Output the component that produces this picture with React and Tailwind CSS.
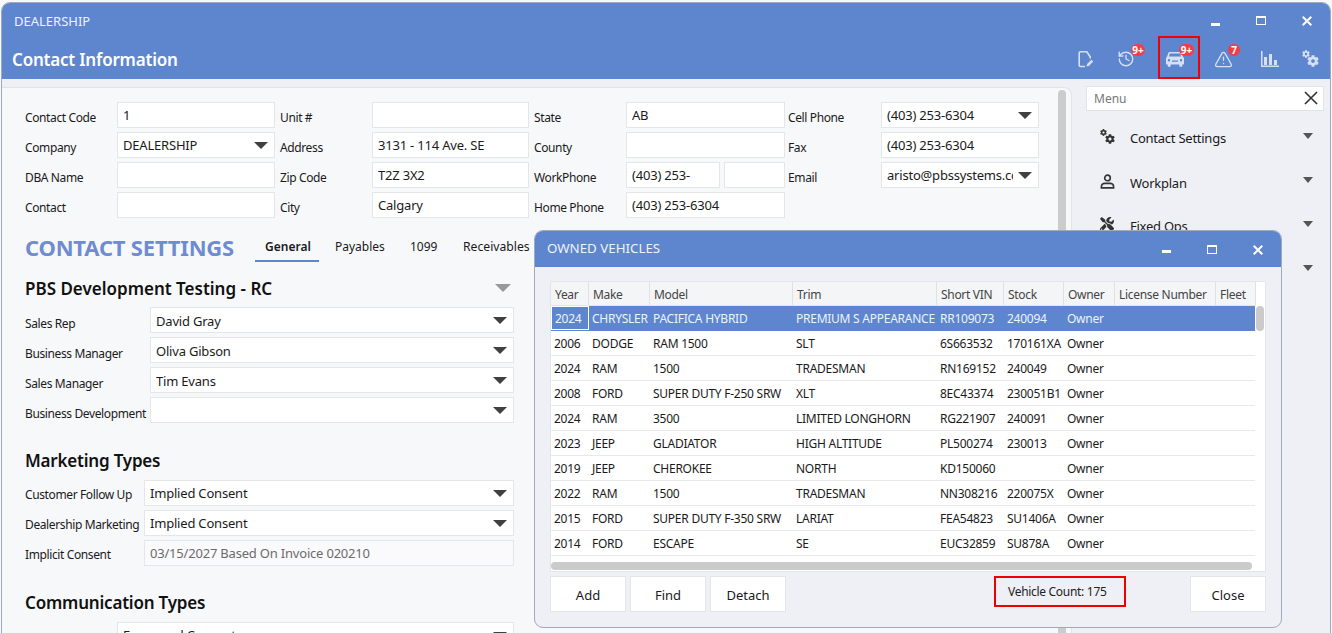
import { History, TriangleAlert } from 'lucide-react';
import { FaCog, FaTools } from 'react-icons/fa';

const VEHICLES = [
  ['2024', 'CHRYSLER', 'PACIFICA HYBRID', 'PREMIUM S APPEARANCE', 'RR109073', '240094', 'Owner'],
  ['2006', 'DODGE', 'RAM 1500', 'SLT', '6S663532', '170161XA', 'Owner'],
  ['2024', 'RAM', '1500', 'TRADESMAN', 'RN169152', '240049', 'Owner'],
  ['2008', 'FORD', 'SUPER DUTY F-250 SRW', 'XLT', '8EC43374', '230051B1', 'Owner'],
  ['2024', 'RAM', '3500', 'LIMITED LONGHORN', 'RG221907', '240091', 'Owner'],
  ['2023', 'JEEP', 'GLADIATOR', 'HIGH ALTITUDE', 'PL500274', '230013', 'Owner'],
  ['2019', 'JEEP', 'CHEROKEE', 'NORTH', 'KD150060', '', 'Owner'],
  ['2022', 'RAM', '1500', 'TRADESMAN', 'NN308216', '220075X', 'Owner'],
  ['2015', 'FORD', 'SUPER DUTY F-350 SRW', 'LARIAT', 'FEA54823', 'SU1406A', 'Owner'],
  ['2014', 'FORD', 'ESCAPE', 'SE', 'EUC32859', 'SU878A', 'Owner'],
];

const COLS = [
  { label: 'Year', w: 'w-[38px]' },
  { label: 'Make', w: 'w-[61px]' },
  { label: 'Model', w: 'w-[143px]' },
  { label: 'Trim', w: 'w-[144px]' },
  { label: 'Short VIN', w: 'w-[67px]' },
  { label: 'Stock', w: 'w-[60px]' },
  { label: 'Owner', w: 'w-[51px]' },
  { label: 'License Number', w: 'w-[101px]' },
  { label: 'Fleet', w: 'w-[40px]' },
];

const Caret = () => (
  <span className="absolute right-[6px] top-[9px] w-0 h-0 border-x-[7px] border-t-[7px] border-x-transparent border-t-[#404040]" />
);

function Field({ value, select, className = 'w-full', muted, lead = 'leading-[24px]' }) {
  return (
    <div className={`relative h-[26px] min-w-0 border border-[#e5e6ea] pl-[5px] text-[13px] tracking-[-0.2px] whitespace-nowrap ${select ? 'pr-[25px]' : 'pr-[2px]'} ${lead} ${muted ? 'text-[#6b6b6b] bg-[#fafafc]' : 'text-[#1a1a1a] bg-white'} ${className}`}>
      {value && <div className="overflow-hidden">{value}</div>}
      {select && <Caret />}
    </div>
  );
}

function Row({ label, labelW, value, select, muted, lead, labelPt = 'pt-[7px]' }) {
  return (
    <div className="flex h-[26px]">
      <div className={`shrink-0 leading-[18px] tracking-[-0.38px] text-[#1a1a1a] whitespace-nowrap ${labelPt} ${labelW}`}>{label}</div>
      <Field value={value} select={select} muted={muted} lead={lead} className="flex-1" />
    </div>
  );
}

const Gears = ({ className, small, big }) => (
  <span className={`relative block ${className}`}>
    <FaCog className={`absolute left-0 top-0 ${small}`} />
    <FaCog className={`absolute right-0 bottom-0 ${big}`} />
  </span>
);

function Badge({ children, className }) {
  return (
    <span className={`absolute h-[12px] rounded-[6px] bg-[#ee3f49] text-white text-[10px] font-bold leading-[12px] text-center ${className}`}>
      {children}
    </span>
  );
}

const CloseGlyph = ({ className, width = 2 }) => (
  <svg viewBox="0 0 10 10" className={className} fill="none" stroke="currentColor" strokeWidth={width}>
    <path d="M0.7 0.7 9.3 9.3M9.3 0.7 0.7 9.3" />
  </svg>
);

const WindowControls = ({ minX, maxX, closeX, minY, maxY }) => (
  <>
    <span className={`absolute w-[9px] h-[3px] bg-white ${minX} ${minY}`} />
    <span className={`absolute w-[10px] h-[9px] border border-t-[2px] border-white ${maxX} ${maxY}`} />
    <CloseGlyph className={`absolute w-[10px] h-[10px] text-white ${closeX} ${maxY}`} />
  </>
);

function MenuItem({ icon, label, top, caretTop }) {
  return (
    <>
      <div className={`absolute left-[1100px] w-[16px] h-[16px] text-[#333] ${top}`}>{icon}</div>
      <div className={`absolute left-[1130px] text-[13px] leading-[18px] tracking-[-0.25px] text-[#1a1a1a] ${top}`}>{label}</div>
      <span className={`absolute left-[1303px] w-0 h-0 border-x-[5px] border-t-[6px] border-x-transparent border-t-[#555] ${caretTop}`} />
    </>
  );
}

export default function App() {
  return (
    <div className="relative w-[1332px] h-[633px] overflow-hidden bg-[#f7f8fa] text-[12px] font-['Noto_Sans','Open_Sans',sans-serif]">
      {/* window frame */}
      <div className="absolute left-[1px] top-[2px] w-[1330px] h-[640px] rounded-t-[9px] bg-[#eff0f5] border border-[#9fabb9] overflow-hidden">
        <div className="h-[76px] bg-[#5d86cf]" />
      </div>

      <div className="absolute left-[14px] top-[12px] text-[13px] leading-[18px] text-[#eef2fa]">DEALERSHIP</div>
      <div className="absolute left-[12px] top-[47px] text-[17px] leading-[25px] tracking-[-0.2px] font-semibold text-white">Contact Information</div>
      <WindowControls minX="left-[1211px]" maxX="left-[1256px]" closeX="left-[1302px]" minY="top-[23px]" maxY="top-[16px]" />

      {/* toolbar */}
      <div className="absolute inset-0 text-[#d6e0f3]">
        <svg viewBox="0 0 16 17" className="absolute left-[1078px] top-[51px] w-[16px] h-[17px]" fill="none" stroke="currentColor" strokeWidth="1.6">
          <path d="M7 15.5H2.5a1.3 1.3 0 0 1-1.3-1.3V2.1A1.3 1.3 0 0 1 2.5.8h6.3l3.4 5v1.6" />
          <path d="M8.5 15.6l.6-2.5 4.3-4.4 1.8 1.8-4.3 4.4z" fill="currentColor" stroke="none" />
        </svg>
        <History className="absolute left-[1117px] top-[50px] w-[18px] h-[18px]" strokeWidth={1.8} />
        <svg viewBox="0 0 18 15" className="absolute left-[1166px] top-[52px] w-[18px] h-[15px]" fill="currentColor">
          <path fillRule="evenodd" d="M3.6 0h10.8c.6 0 1.1.4 1.3.9L17 4.800c.6.4 1 1 1 1.800v5.200c0 .4-.3.7-.7.7H16.300v1.300c0 .6-.4 1-1 1h-1c-.6 0-1-.4-1-1v-1.300H4.700v1.300c0 .6-.4 1-1 1h-1c-.6 0-1-.4-1-1v-1.300H.7c-.4 0-.7-.3-.7-.7V6.600c0-.8.4-1.400 1-1.800L2.300.9C2.500.4 3 0 3.600 0zM3.900 1.500 2.900 4.500h12.200l-1-3zM3 7a1.200 1.200 0 1 0 0 2.400A1.200 1.200 0 0 0 3 7zm12 0a1.200 1.200 0 1 0 0 2.400A1.200 1.200 0 0 0 15 7zM6 8.500v1.200h6V8.500z" />
        </svg>
        <TriangleAlert className="absolute left-[1214px] top-[50px] w-[19px] h-[19px]" strokeWidth={1.7} />
        <svg viewBox="0 0 18 16" className="absolute left-[1261px] top-[51px] w-[18px] h-[16px]" fill="currentColor">
          <path d="M0 0h1.500v14.500H18V16H0zM3 6h3v8H3zM8 3h3v11H8zM13 9h3v5h-3z" />
        </svg>
        <Gears className="absolute left-[1302px] top-[50px] w-[17px] h-[17px]" small="w-[8px] h-[8px]" big="w-[12px] h-[12px]" />
      </div>
      <Badge className="left-[1131px] top-[44px] w-[14px]">9+</Badge>
      <Badge className="left-[1179px] top-[44px] w-[15px]">9+</Badge>
      <Badge className="left-[1228px] top-[44px] w-[12px]">7</Badge>
      <div className="absolute left-[1158px] top-[36px] w-[42px] h-[43px] border-2 border-[#f00000]" />

      {/* main panel */}
      <div className="absolute left-[2px] top-[87px] w-[1070px] h-[560px] bg-[#f7f8fa] border-t border-r border-[#e2e3e8] rounded-tr-[8px]" />
      <div className="absolute left-[1058px] top-[90px] w-[8px] h-[560px] rounded-[4px] bg-[#cccccc]" />

      <div className="absolute left-[25px] top-[102px] w-[250px] flex flex-col gap-[4px]">
        <Row label="Contact Code" labelW="w-[92px]" value="1" />
        <Row label="Company" labelW="w-[92px]" value="DEALERSHIP" select />
        <Row label="DBA Name" labelW="w-[92px]" value="" />
        <Row label="Contact" labelW="w-[92px]" value="" />
      </div>
      <div className="absolute left-[280px] top-[102px] w-[249px] flex flex-col gap-[4px]">
        <Row label="Unit #" labelW="w-[92px]" value="" />
        <Row label="Address" labelW="w-[92px]" value="3131 - 114 Ave. SE" />
        <Row label="Zip Code" labelW="w-[92px]" value="T2Z 3X2" />
        <Row label="City" labelW="w-[92px]" value="Calgary" />
      </div>
      <div className="absolute left-[534px] top-[102px] w-[251px] flex flex-col gap-[4px]">
        <Row label="State" labelW="w-[92px]" value="AB" />
        <Row label="County" labelW="w-[92px]" value="" />
        <div className="flex h-[26px]">
          <div className="w-[92px] shrink-0 pt-[7px] leading-[18px] tracking-[-0.38px] text-[#1a1a1a]">WorkPhone</div>
          <Field value="(403) 253-" className="w-[94px] shrink-0 mr-[4px]" />
          <Field value="" className="flex-1" />
        </div>
        <Row label="Home Phone" labelW="w-[92px]" value="(403) 253-6304" />
      </div>
      <div className="absolute left-[788px] top-[102px] w-[251px] flex flex-col gap-[4px]">
        <Row label="Cell Phone" labelW="w-[93px]" value="(403) 253-6304" select />
        <Row label="Fax" labelW="w-[93px]" value="(403) 253-6304" />
        <Row label="Email" labelW="w-[93px]" value="aristo@pbssystems.cc" select />
      </div>

      <div className="absolute left-[25px] top-[232px] text-[22px] leading-[30px] tracking-[-0.2px] font-bold text-[#6f8cd1]">CONTACT SETTINGS</div>
      <div className="absolute left-[255px] top-[260px] w-[64px] h-[2px] bg-[#5d86cf]" />
      <div className="absolute left-[265px] top-[238px] font-semibold leading-[18px] text-[#1a1a1a]">General</div>
      <div className="absolute left-[335px] top-[238px] leading-[18px] text-[#1a1a1a]">Payables</div>
      <div className="absolute left-[410px] top-[238px] leading-[18px] text-[#1a1a1a]">1099</div>
      <div className="absolute left-[463px] top-[238px] leading-[18px] text-[12.2px] text-[#1a1a1a]">Receivables</div>

      <div className="absolute left-[25px] top-[276px] text-[17px] leading-[25px] font-semibold text-[#111]">PBS Development Testing - RC</div>
      <span className="absolute left-[495px] top-[284px] w-0 h-0 border-x-[8px] border-t-[8px] border-x-transparent border-t-[#999]" />

      <div className="absolute left-[25px] top-[307px] w-[489px] flex flex-col gap-[4px]">
        <Row label="Sales Rep" labelW="w-[125px]" labelPt="pt-[8px]" lead="leading-[27px]" value="David Gray" select />
        <Row label="Business Manager" labelW="w-[125px]" labelPt="pt-[8px]" lead="leading-[27px]" value="Oliva Gibson" select />
        <Row label="Sales Manager" labelW="w-[125px]" labelPt="pt-[8px]" lead="leading-[27px]" value="Tim Evans" select />
        <Row label="Business Development" labelW="w-[125px]" labelPt="pt-[8px]" lead="leading-[27px]" value="" select />
      </div>

      <div className="absolute left-[25px] top-[448px] text-[17px] leading-[25px] tracking-[-0.2px] font-semibold text-[#111]">Marketing Types</div>
      <div className="absolute left-[25px] top-[480px] w-[489px] flex flex-col gap-[4px]">
        <Row label="Customer Follow Up" labelW="w-[119px]" labelPt="pt-[6px]" lead="leading-[25px]" value="Implied Consent" select />
        <Row label="Dealership Marketing" labelW="w-[119px]" labelPt="pt-[6px]" lead="leading-[25px]" value="Implied Consent" select />
        <Row label="Implicit Consent" labelW="w-[119px]" labelPt="pt-[6px]" lead="leading-[25px]" value="03/15/2027 Based On Invoice 020210" muted />
      </div>

      <div className="absolute left-[25px] top-[590px] text-[17px] leading-[25px] tracking-[-0.2px] font-semibold text-[#111]">Communication Types</div>
      <div className="absolute left-[25px] top-[622px] w-[489px]">
        <Row label="Letter" labelW="w-[92px]" value="Expressed Consent" select />
      </div>

      {/* side menu */}
      <div className="absolute left-[1086px] top-[86px] w-[238px] h-[25px] bg-white border border-[#e2e3e8] pl-[7px] text-[#777] leading-[23px]">Menu</div>
      <CloseGlyph className="absolute left-[1304px] top-[91px] w-[14px] h-[14px] text-[#333]" width={1.2} />
      <MenuItem
        label="Contact Settings"
        top="top-[129px]"
        caretTop="top-[133px]"
        icon={<Gears className="w-[15px] h-[15px]" small="w-[7px] h-[7px]" big="w-[10px] h-[10px]" />}
      />
      <MenuItem
        label="Workplan"
        top="top-[174px]"
        caretTop="top-[177px]"
        icon={
          <svg viewBox="0 0 16 16" className="w-[15px] h-[15px]" fill="none" stroke="currentColor" strokeWidth="1.700">
            <circle cx="8" cy="4.200" r="3" />
            <path d="M1.500 14.800v-1.500c0-2 1.800-3.300 3.500-3.300h6c1.700 0 3.500 1.300 3.500 3.300v1.500z" />
          </svg>
        }
      />
      <MenuItem
        label="Fixed Ops"
        top="top-[217px]"
        caretTop="top-[221px]"
        icon={<FaTools className="w-[14px] h-[14px]" />}
      />
      <span className="absolute left-[1303px] top-[265px] w-0 h-0 border-x-[5px] border-t-[6px] border-x-transparent border-t-[#555]" />

      {/* owned vehicles dialog */}
      <div className="absolute left-[534px] top-[230px] w-[748px] h-[398px] rounded-[9px] bg-[#eff0f5] border border-[#9fabb9] overflow-hidden">
        <div className="h-[36px] bg-[#5d86cf] pl-[12px] text-[13.3px] leading-[35px] text-[#eef2fa]">OWNED VEHICLES</div>
      </div>
      <WindowControls minX="left-[1162px]" maxX="left-[1207px]" closeX="left-[1253px]" minY="top-[250px]" maxY="top-[245px]" />

      <div className="absolute left-[550px] top-[281px] w-[716px] h-[291px] bg-white border border-[#e4e5e9] overflow-hidden">
        <div className="flex h-[24px] w-[705px] bg-[#f4f5f7] border-b border-[#e4e5e9] text-[#444]">
          {COLS.map((c) => (
            <div key={c.label} className={`${c.w} shrink-0 pl-[4px] leading-[25px] tracking-[-0.3px] border-r border-[#e0e1e5] whitespace-nowrap overflow-hidden`}>{c.label}</div>
          ))}
        </div>
        {VEHICLES.map((row, i) => (
          <div key={row[0] + row[1] + i} className={`flex h-[25px] w-[704px] border-b leading-[26px] tracking-[-0.25px] ${i === 0 ? 'bg-[#5d86cf] text-[#eef2fa] border-[#5d86cf]' : 'text-[#1a1a1a] border-[#e8e9ec]'}`}>
            {row.map((cell, j) => (
              <div key={j} className={`${COLS[j].w} shrink-0 pl-[3px] whitespace-nowrap ${i === 0 && j === 0 ? 'border border-white leading-[24px] pl-[2px]' : ''}`}>{cell}</div>
            ))}
          </div>
        ))}
        <div className="absolute left-0 top-[280px] w-[701px] h-[8px] rounded-[4px] bg-[#cbcbcb]" />
        <div className="absolute left-[705px] top-[24px] w-[8px] h-[25px] rounded-[4px] bg-[#cbcbcb]" />
      </div>

      {['Add', 'Find', 'Detach'].map((label, i) => (
        <button
          key={label}
          className={`absolute top-[576px] w-[76px] h-[36px] bg-white border border-[#e4e5e9] pt-[3px] text-[13px] text-[#1a1a1a] ${i === 0 ? 'left-[550px]' : i === 1 ? 'left-[630px]' : 'left-[710px]'}`}
        >
          {label}
        </button>
      ))}
      <div className="absolute left-[994px] top-[576px] w-[132px] h-[31px] border-2 border-[#f00000] pl-[12px] leading-[28px] tracking-[-0.3px] text-[#222]">Vehicle Count: 175</div>
      <button className="absolute left-[1190px] top-[576px] w-[76px] h-[36px] bg-white border border-[#e4e5e9] pt-[3px] text-[13px] text-[#1a1a1a]">Close</button>
    </div>
  );
}
